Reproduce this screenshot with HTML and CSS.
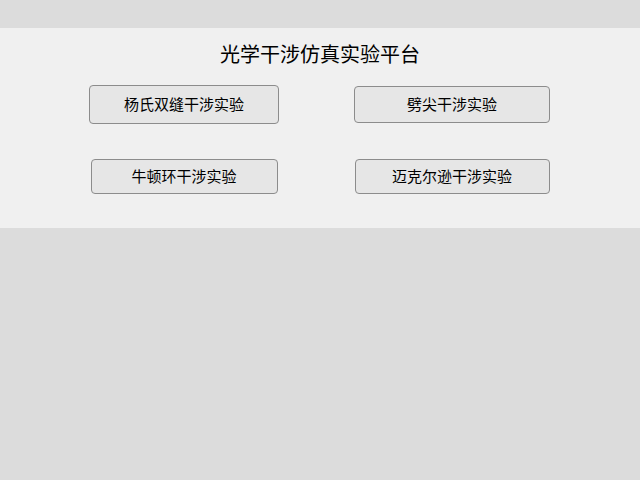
FILE: index.html
```html
<!DOCTYPE html>
<html lang="zh">
<head>
<meta charset="utf-8">
<title>光学干涉仿真实验平台</title>
<link rel="stylesheet" href="styles.css">
</head>
<body>
<main class="panel">
  <h1 class="title">光学干涉仿真实验平台</h1>
  <div class="grid">
    <button class="btn btn-young">杨氏双缝干涉实验</button>
    <button class="btn btn-wedge">劈尖干涉实验</button>
    <button class="btn btn-newton">牛顿环干涉实验</button>
    <button class="btn btn-michelson">迈克尔逊干涉实验</button>
  </div>
</main>
</body>
</html>
```

FILE: styles.css
```css
html, body {
  margin: 0;
  padding: 0;
}
body {
  background: #dcdcdc;
  width: 640px;
  height: 480px;
  padding-top: 28px;
  box-sizing: border-box;
  font-family: "Noto Sans CJK SC", "Noto Sans", sans-serif;
  color: #000;
}
.panel {
  background: #f0f0f0;
  height: 200px;
  box-sizing: border-box;
  padding-top: 14px;
}
.title {
  margin: 0;
  font-size: 20px;
  font-weight: normal;
  line-height: 24px;
  text-align: center;
}
.grid {
  margin-top: 19px;
  padding-left: 88px;
  display: grid;
  grid-template-columns: 192px 198px;
  grid-template-rows: 39px 35px;
  column-gap: 73px;
  row-gap: 35px;
  align-items: center;
}
.btn {
  justify-self: center;
  font-family: inherit;
  font-size: 15px;
  line-height: 18px;
  color: #000;
  background: #e6e6e6;
  border: 1px solid #8c8c8c;
  border-radius: 4px;
  padding: 0 0 2px;
  margin: 0;
}
.btn-young { width: 190px; height: 39px; }
.btn-wedge { width: 196px; height: 37px; }
.btn-newton { width: 187px; height: 35px; }
.btn-michelson { width: 195px; height: 35px; }
```
